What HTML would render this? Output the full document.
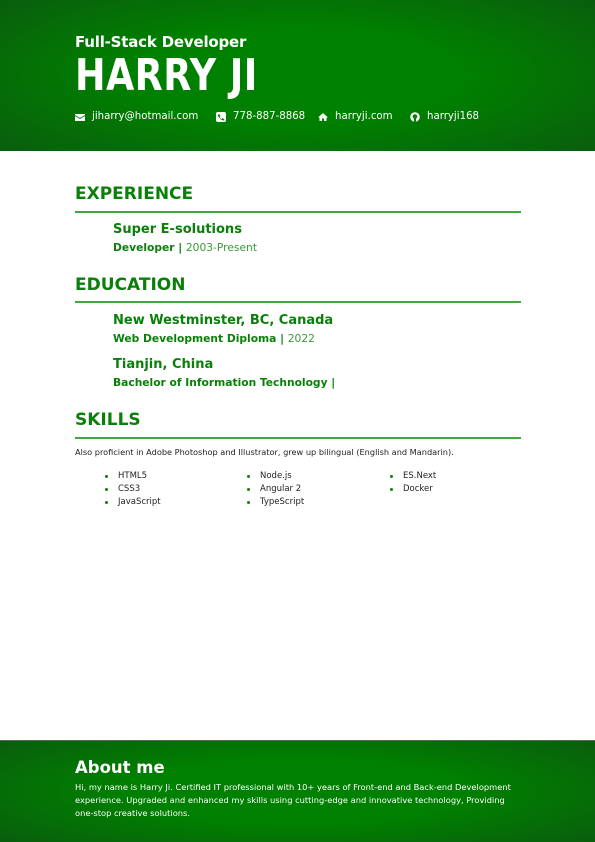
<!DOCTYPE html>
<html><head><meta charset="utf-8"><style>
*{margin:0;padding:0;box-sizing:border-box}
body{width:595px;height:842px;position:relative;background:#fff;font-family:"DejaVu Sans","Liberation Sans",sans-serif;overflow:hidden}
.hdr{position:absolute;left:0;top:0;width:595px;height:151px;background:radial-gradient(ellipse 70% 80% at 50% 50%,#008000 40%,#0a5a0e 100%);color:#fff}
.ftr{position:absolute;left:0;top:740px;width:595px;height:102px;background:radial-gradient(ellipse 70% 80% at 50% 50%,#008000 40%,#0a5a0e 100%);border-top:1px solid #5a6a5a;color:#fff}
.t1{position:absolute;left:75px;top:33px;font-size:15px;font-weight:bold;letter-spacing:-0.2px}
.t2{position:absolute;left:75px;top:50px;font-size:44px;font-weight:bold;letter-spacing:0.5px;transform:scaleX(0.83);transform-origin:0 0}
.ct{position:absolute;top:111px;font-size:10.2px;display:flex;align-items:center;gap:7px}
.ct svg{width:10px;height:10px;fill:#fff}
h2{position:absolute;left:75px;font-size:17px;color:#0a800a;font-weight:bold}
.rule{position:absolute;left:75px;width:446px;height:1.5px;background:#3fa83f}
.org{position:absolute;left:113px;font-size:13px;color:#0a800a;font-weight:bold}
.sub{position:absolute;left:113px;font-size:10.7px;color:#0a800a;font-weight:bold}
.sub span{font-weight:normal;color:#3a9a3a}
.p{position:absolute;left:75px;top:447px;font-size:8.2px;color:#222}
.li{position:absolute;font-size:8.5px;color:#222}
.li:before{content:"";position:absolute;left:-13px;top:4px;width:3px;height:3px;border-radius:50%;background:#0a800a}
.ab{position:absolute;left:75px;top:17px;font-size:16.5px;font-weight:bold}
.abt{position:absolute;left:75px;top:40px;width:450px;font-size:8.3px;line-height:13px}
</style></head><body>
<div class="hdr">
<div class="t1">Full-Stack Developer</div>
<div class="t2">HARRY JI</div>
<div class="ct" style="left:75px"><svg viewBox="0 0 10 10"><path d="M0 2h10v1L5 6 0 3zM0 4l5 3 5-3v5H0z"/></svg>jiharry@hotmail.com</div>
<div class="ct" style="left:216px"><svg viewBox="0 0 10 10"><rect width="10" height="10" rx="2"/><path d="M3 2l1.5 2-1 1c.5 1 1 1.5 2 2l1-1L8.5 7.5 7.5 8.5C5 8 2 5 1.8 3z" fill="#0a800a"/></svg>778-887-8868</div>
<div class="ct" style="left:318px"><svg viewBox="0 0 10 10"><path d="M5 1l5 4.5H8.5V9h-2.5V6.5h-2V9H1.5V5.5H0z"/></svg>harryji.com</div>
<div class="ct" style="left:410px"><svg viewBox="0 0 10 10"><circle cx="5" cy="5" r="4.8"/><circle cx="5" cy="4.5" r="2.3" fill="#0a800a"/><rect x="4" y="6" width="2" height="4" fill="#0a800a"/></svg>harryji168</div>
</div>
<h2 style="top:184px">EXPERIENCE</h2><div class="rule" style="top:211px"></div>
<div class="org" style="top:222px">Super E-solutions</div>
<div class="sub" style="top:241px">Developer | <span>2003-Present</span></div>
<h2 style="top:275px">EDUCATION</h2><div class="rule" style="top:301px"></div>
<div class="org" style="top:313px">New Westminster, BC, Canada</div>
<div class="sub" style="top:332px">Web Development Diploma | <span>2022</span></div>
<div class="org" style="top:357px">Tianjin, China</div>
<div class="sub" style="top:376px">Bachelor of Information Technology |</div>
<h2 style="top:410px">SKILLS</h2><div class="rule" style="top:437px"></div>
<div class="p">Also proficient in Adobe Photoshop and Illustrator, grew up bilingual (English and Mandarin).</div>
<div class="li" style="left:118px;top:471px">HTML5</div>
<div class="li" style="left:118px;top:484px">CSS3</div>
<div class="li" style="left:118px;top:497px">JavaScript</div>
<div class="li" style="left:260px;top:471px">Node.js</div>
<div class="li" style="left:260px;top:484px">Angular 2</div>
<div class="li" style="left:260px;top:497px">TypeScript</div>
<div class="li" style="left:403px;top:471px">ES.Next</div>
<div class="li" style="left:403px;top:484px">Docker</div>
<div class="ftr">
<div class="ab">About me</div>
<div class="abt">Hi, my name is Harry Ji. Certified IT professional with 10+ years of Front-end and Back-end Development experience. Upgraded and enhanced my skills using cutting-edge and innovative technology, Providing one-stop creative solutions.</div>
</div>
</body></html>
